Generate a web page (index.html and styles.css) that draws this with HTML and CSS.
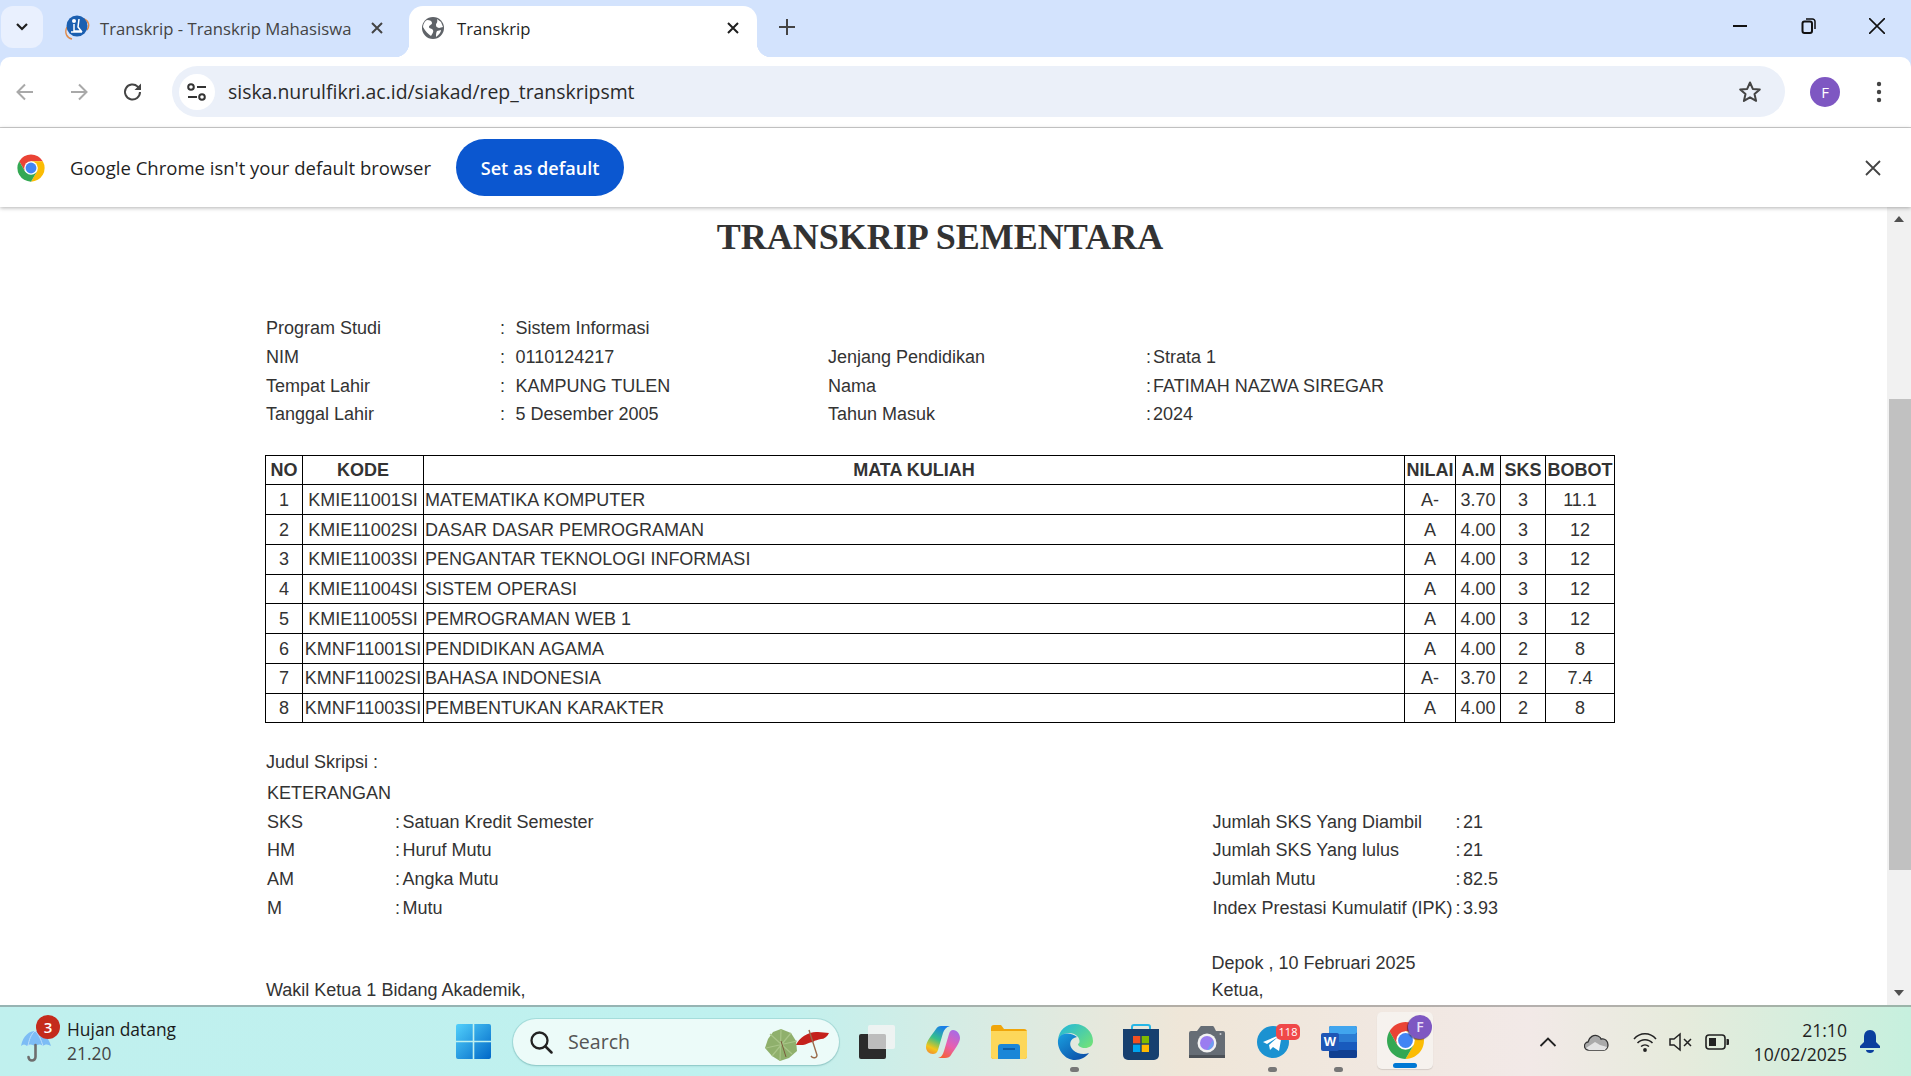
FILE: index.html
```html
<!DOCTYPE html>
<html lang="id">
<head>
<meta charset="utf-8">
<title>Transkrip</title>
<link rel="stylesheet" href="styles.css">
</head>
<body>
<header class="tabstrip">
  <button class="tab-search"><svg width="14" height="10" viewBox="0 0 14 10"><path d="M2 2l5 5 5-5" fill="none" stroke="#1f1f1f" stroke-width="2.2"/></svg></button>
  <div class="tab tab-idle">
    <svg class="favicon" width="26" height="26" viewBox="0 0 26 26"><path d="M3 12c-3 6 0 11 5 12" fill="none" stroke="#e08a4a" stroke-width="1.4"/><path d="M20 4c5 2 6 7 3 11" fill="none" stroke="#e08a4a" stroke-width="1.4"/><circle cx="13" cy="11" r="10.5" fill="#1b5fb0"/><circle cx="10" cy="6" r="2" fill="#fff"/><path d="M10 9v7h7M15 4l-1 8 4 5M7 17h11" fill="none" stroke="#fff" stroke-width="1.5"/></svg>
    <span class="tab-title">Transkrip - Transkrip Mahasiswa</span>
    <svg class="tab-x" width="14" height="14" viewBox="0 0 14 14"><path d="M2 2l10 10M12 2L2 12" stroke="#444" stroke-width="2"/></svg>
  </div>
  <div class="tab tab-active">
    <svg class="globe" width="22" height="22" viewBox="0 0 22 22"><circle cx="11" cy="11" r="11" fill="#5f6368"/><path d="M5 3c3 0 5 1 5 3s-3 2-3 4 3 1 4 3-1 4-2 6c-3-2-6-5-8-9 0-3 2-6 4-7zM15 2l4 3 2 5-4 1c-2-1-3-1-3-3s2-2 1-6zM15 14l4-1c0 2-2 5-5 7 0-3 0-4 1-6z" fill="#fff"/></svg>
    <span class="tab-title">Transkrip</span>
    <svg class="tab-x" width="14" height="14" viewBox="0 0 14 14"><path d="M2 2l10 10M12 2L2 12" stroke="#1f1f1f" stroke-width="2"/></svg>
  </div>
  <svg class="newtab" width="18" height="18" viewBox="0 0 18 18"><path d="M9 1v16M1 9h16" stroke="#444" stroke-width="2"/></svg>
  <div class="winctl">
    <svg width="16" height="16" viewBox="0 0 16 16"><path d="M1 8h14" stroke="#111" stroke-width="2"/></svg>
    <svg width="16" height="16" viewBox="0 0 16 16"><rect x="1.5" y="3.5" width="9.5" height="11.5" rx="2" fill="none" stroke="#111" stroke-width="2"/><path d="M5 1h6.5a2.5 2.5 0 0 1 2.5 2.5V11" fill="none" stroke="#111" stroke-width="1.5"/></svg>
    <svg width="16" height="16" viewBox="0 0 16 16"><path d="M0 0l16 16M16 0L0 16" stroke="#111" stroke-width="1.6"/></svg>
  </div>
</header>

<nav class="toolbar">
  <svg class="navbtn" width="20" height="20" viewBox="0 0 20 20"><path d="M18 10H3M10 2.5L2.5 10l7.5 7.5" fill="none" stroke="#a9a9a9" stroke-width="2"/></svg>
  <svg class="navbtn" width="20" height="20" viewBox="0 0 20 20"><path d="M2 10h15M10 2.5l7.500 7.500-7.500 7.500" fill="none" stroke="#a9a9a9" stroke-width="2"/></svg>
  <svg class="navbtn" width="20" height="20" viewBox="0 0 20 20"><path d="M17 10a7.500 7.500 0 1 1-2.300-5.400L17 7" fill="none" stroke="#444" stroke-width="2"/><path d="M18 1.500V8h-6.500z" fill="#444"/></svg>
  <div class="omnibox">
    <span class="siteinfo"><svg width="20" height="18" viewBox="0 0 20 18"><circle cx="4" cy="4" r="2.800" fill="none" stroke="#333" stroke-width="2"/><path d="M10 4h9M1 14h9" stroke="#333" stroke-width="2"/><circle cx="15" cy="14" r="2.800" fill="none" stroke="#333" stroke-width="2"/></svg></span>
    <span class="url">siska.nurulfikri.ac.id/siakad/rep_transkripsmt</span>
    <svg class="star" width="24" height="24" viewBox="0 0 24 24"><path d="M12 2.500l2.800 6.400 7 .6-5.300 4.600 1.600 6.800-6.100-3.600-6.100 3.600 1.600-6.800-5.300-4.600 7-.6z" fill="none" stroke="#444" stroke-width="2" stroke-linejoin="round"/></svg>
  </div>
  <span class="avatar">F</span>
  <svg class="kebab" width="6" height="22" viewBox="0 0 6 22"><circle cx="3" cy="3" r="2.200" fill="#444"/><circle cx="3" cy="11" r="2.200" fill="#444"/><circle cx="3" cy="19" r="2.200" fill="#444"/></svg>
</nav>

<aside class="infobar">
  <svg class="chrome-logo" width="30" height="30" viewBox="4 2 40 44"><use href="#chrome"/></svg>
  <span class="info-text">Google Chrome isn't your default browser</span>
  <button class="set-default">Set as default</button>
  <svg class="info-x" width="16" height="16" viewBox="0 0 16 16"><path d="M1 1l14 14M15 1L1 15" stroke="#444" stroke-width="1.800"/></svg>
</aside>

<div class="viewport">
  <main class="page">
    <h1 class="title">TRANSKRIP SEMENTARA</h1>
    <section class="identity">
      <span>Program Studi</span><span>:</span><span>Sistem Informasi</span><span></span><span></span><span></span>
      <span>NIM</span><span>:</span><span>0110124217</span><span>Jenjang Pendidikan</span><span>:</span><span>Strata 1</span>
      <span>Tempat Lahir</span><span>:</span><span>KAMPUNG TULEN</span><span>Nama</span><span>:</span><span>FATIMAH NAZWA SIREGAR</span>
      <span>Tanggal Lahir</span><span>:</span><span>5 Desember 2005</span><span>Tahun Masuk</span><span>:</span><span>2024</span>
    </section>
    <table class="grades">
      <colgroup><col class="c-no"><col class="c-kode"><col class="c-mk"><col class="c-nilai"><col class="c-am"><col class="c-sks"><col class="c-bobot"></colgroup>
      <thead><tr><th>NO</th><th>KODE</th><th>MATA KULIAH</th><th>NILAI</th><th>A.M</th><th>SKS</th><th>BOBOT</th></tr></thead>
      <tbody>
        <tr><td>1</td><td>KMIE11001SI</td><td>MATEMATIKA KOMPUTER</td><td>A-</td><td>3.70</td><td>3</td><td>11.1</td></tr>
        <tr><td>2</td><td>KMIE11002SI</td><td>DASAR DASAR PEMROGRAMAN</td><td>A</td><td>4.00</td><td>3</td><td>12</td></tr>
        <tr><td>3</td><td>KMIE11003SI</td><td>PENGANTAR TEKNOLOGI INFORMASI</td><td>A</td><td>4.00</td><td>3</td><td>12</td></tr>
        <tr><td>4</td><td>KMIE11004SI</td><td>SISTEM OPERASI</td><td>A</td><td>4.00</td><td>3</td><td>12</td></tr>
        <tr><td>5</td><td>KMIE11005SI</td><td>PEMROGRAMAN WEB 1</td><td>A</td><td>4.00</td><td>3</td><td>12</td></tr>
        <tr><td>6</td><td>KMNF11001SI</td><td>PENDIDIKAN AGAMA</td><td>A</td><td>4.00</td><td>2</td><td>8</td></tr>
        <tr><td>7</td><td>KMNF11002SI</td><td>BAHASA INDONESIA</td><td>A-</td><td>3.70</td><td>2</td><td>7.4</td></tr>
        <tr><td>8</td><td>KMNF11003SI</td><td>PEMBENTUKAN KARAKTER</td><td>A</td><td>4.00</td><td>2</td><td>8</td></tr>
      </tbody>
    </table>
    <p class="thesis">Judul Skripsi :</p>
    <section class="notes">
      <div class="legend">
        <span class="legend-head">KETERANGAN</span>
        <span>SKS</span><span>:</span><span>Satuan Kredit Semester</span>
        <span>HM</span><span>:</span><span>Huruf Mutu</span>
        <span>AM</span><span>:</span><span>Angka Mutu</span>
        <span>M</span><span>:</span><span>Mutu</span>
      </div>
      <div class="summary">
        <span>Jumlah SKS Yang Diambil</span><span>:</span><span>21</span>
        <span>Jumlah SKS Yang lulus</span><span>:</span><span>21</span>
        <span>Jumlah Mutu</span><span>:</span><span>82.5</span>
        <span>Index Prestasi Kumulatif (IPK)</span><span>:</span><span>3.93</span>
      </div>
    </section>
    <section class="signatures">
      <div class="sign-left">Wakil Ketua 1 Bidang Akademik,</div>
      <div class="sign-right"><div>Depok , 10 Februari 2025</div><div>Ketua,</div></div>
    </section>
  </main>
  <div class="scrollbar">
    <span class="arrow-up"></span>
    <span class="thumb"></span>
    <span class="arrow-down"></span>
  </div>
</div>

<footer class="taskbar">
  <div class="weather">
    <span class="weather-icon">
      <svg width="32" height="40" viewBox="0 0 32 40"><path d="M1 21C3 10 10 6 15 6s13 4 16 15c-3-2-6-2-8 0-2-2-5-2-8 0-3-2-6-2-8 0-2-2-4-2-6 0z" fill="#7dbcf5"/><path d="M15 6c-4 3-6 9-7 15M15 6c4 3 6 9 8 15" stroke="#bfe0fb" stroke-width="1" fill="none"/><path d="M15.500 20v12a3.500 3.500 0 0 1-7 0" fill="none" stroke="#6e6e6e" stroke-width="2.600" stroke-linecap="round"/></svg>
      <span class="weather-badge">3</span>
    </span>
    <span class="weather-text"><span class="weather-title">Hujan datang</span><span class="weather-sub">21.20</span></span>
  </div>
  <svg class="winlogo" width="35" height="35" viewBox="0 0 35 35"><defs><linearGradient id="wg" x1="0" y1="0" x2="1" y2="1"><stop offset="0" stop-color="#52d0fb"/><stop offset="1" stop-color="#0068c8"/></linearGradient></defs><path d="M2 0h14.700v16.700H0V2a2 2 0 0 1 2-2zM18.300 0H33a2 2 0 0 1 2 2v14.700H18.300zM0 18.300h16.700V35H2a2 2 0 0 1-2-2zM18.300 18.300H35V33a2 2 0 0 1-2 2H18.300z" fill="url(#wg)"/></svg>
  <div class="searchbox">
    <svg width="24" height="24" viewBox="0 0 24 24"><circle cx="10.500" cy="10.500" r="8" fill="none" stroke="#222" stroke-width="2.300"/><path d="M16.500 16.500l6 6" stroke="#222" stroke-width="2.500" stroke-linecap="round"/></svg>
    <span class="search-label">Search</span>
    <svg class="search-art" width="66" height="34" viewBox="0 0 66 34"><path d="M16 1l10 4 5 8 1 10-8 7-9 3-8-5-7-8 3-9 5-7z" fill="#8fb06c"/><path d="M16 1l-1 32M1 20L32 13M5 6l22 20M26 5L7 28" stroke="#a9c588" stroke-width="1.200"/><path d="M16 13l5 16" stroke="#7a5a3c" stroke-width="1"/><path d="M31 17c3-8 14-14 22-13l11 1c-2 4-5 6-8 6-3 1-6 1-8 3-4 0-7 3-10 3z" fill="#c4211c"/><path d="M44 2l8 25c0 3-4 4-6 1" fill="none" stroke="#9b6b4a" stroke-width="1.400"/></svg>
  </div>
  <div class="apps">
    <span class="app"><svg width="36" height="34" viewBox="0 0 36 34"><rect x="0" y="9" width="27" height="25" rx="2" fill="#2b2b2b"/><rect x="9" y="0" width="27" height="24" rx="2" fill="#f3f3f3" fill-opacity=".85"/><rect x="9" y="9" width="18" height="15" rx="2" fill="#bdbdbd"/></svg></span>
    <span class="app"><svg width="34" height="32" viewBox="0 0 34 32"><defs><linearGradient id="cp1" x1=".6" y1="0" x2=".2" y2="1"><stop offset="0" stop-color="#1a7fe8"/><stop offset=".45" stop-color="#35c08a"/><stop offset=".8" stop-color="#f5c518"/><stop offset="1" stop-color="#f09030"/></linearGradient><linearGradient id="cp2" x1=".8" y1="0" x2=".3" y2="1"><stop offset="0" stop-color="#a46be8"/><stop offset=".55" stop-color="#e85fb0"/><stop offset="1" stop-color="#f4613a"/></linearGradient></defs><path d="M10 3C11 1 13 0 15 0H24C20 1 18 4 17 7L12 24C11 27 9 28 7 28 3 28 0 25 0 21 0 15 6 9 10 3z" fill="url(#cp1)"/><path d="M19 32H12C16 31 17 28 18 25L23 8C24 5 25 4 27 4 31 4 34 8 34 12 34 17 28 24 25 29 24 31 22 32 19 32z" fill="url(#cp2)"/></svg></span>
    <span class="app"><svg width="36" height="34" viewBox="0 0 36 34"><path d="M0 3a3 3 0 0 1 3-3h7l3 4h20a3 3 0 0 1 3 3v24a3 3 0 0 1-3 3H3a3 3 0 0 1-3-3z" fill="#f0a50a"/><path d="M0 6h36v25a3 3 0 0 1-3 3H3a3 3 0 0 1-3-3z" fill="#fdd75a"/><path d="M7 34V22a3 3 0 0 1 3-3h16a3 3 0 0 1 3 3v12z" fill="#1a86d8"/><path d="M12 24h12" stroke="#0b5ea8" stroke-width="2"/></svg></span>
    <span class="app app-dot"><svg width="36" height="36" viewBox="0 0 36 36"><defs><linearGradient id="eg" x1="0" y1="0" x2="1" y2=".8"><stop offset="0" stop-color="#1fb6e0"/><stop offset="1" stop-color="#6fe07c"/></linearGradient><linearGradient id="eb" x1="0" y1="0" x2=".8" y2="1"><stop offset="0" stop-color="#1aa0e0"/><stop offset="1" stop-color="#0b4fa8"/></linearGradient></defs><path d="M1 16C2 6 9 0 18 0 28 0 36 8 36 17 36 22 32 24 28 24 24 24 21 22 21 20 23 19 23 16 21 13 18 9 12 8 7 10 4 11 2 13 1 16z" fill="url(#eg)"/><path d="M1 16C0 26 8 36 18 36 24 36 29 33 32 29 27 31 20 30 16 26 11 21 13 14 20 13 14 8 3 8 1 16z" fill="url(#eb)"/></svg></span>
    <span class="app"><svg width="36" height="36" viewBox="0 0 36 36"><path d="M9 6V3a2 2 0 0 1 2-2h14a2 2 0 0 1 2 2v3" fill="none" stroke="#27b6e6" stroke-width="2"/><path d="M0 5h36v26a5 5 0 0 1-5 5H5a5 5 0 0 1-5-5z" fill="#17406f"/><rect x="10" y="12" width="7.300" height="7.300" fill="#f25022"/><rect x="18.700" y="12" width="7.300" height="7.300" fill="#7fba00"/><rect x="10" y="20.700" width="7.300" height="7.300" fill="#00a4ef"/><rect x="18.700" y="20.700" width="7.300" height="7.300" fill="#ffb900"/></svg></span>
    <span class="app"><svg width="36" height="32" viewBox="0 0 36 32"><path d="M0 7a2 2 0 0 1 2-2h6l3-4a2 2 0 0 1 1-1h11a2 2 0 0 1 2 1l2 4h7a2 2 0 0 1 2 2v25H0z" fill="#666d75"/><rect x="0" y="29" width="36" height="3" fill="#4c5157"/><circle cx="18" cy="17" r="9.500" fill="#f2f2f2"/><circle cx="18" cy="17" r="7" fill="#9a7df0"/><path d="M18 24a7 7 0 0 0 6-10z" fill="#6ea0f0"/><circle cx="31.500" cy="8" r="1" fill="#c9cdd2"/></svg></span>
    <span class="app app-dot"><span class="tg-wrap"><svg width="32" height="32" viewBox="0 0 32 32"><circle cx="16" cy="16" r="16" fill="#1b92d1"/><path d="M6 16l19-8-3 17-6-4-3 3-1-5 9-8-11 7z" fill="#fff"/></svg><span class="tg-badge">118</span></span></span>
    <span class="app app-dot"><span class="word"><svg width="36" height="32" viewBox="0 0 36 32"><rect x="8" y="0" width="28" height="32" rx="2" fill="#185abd"/><rect x="8" y="0" width="28" height="8" rx="2" fill="#41a5ee"/><rect x="8" y="8" width="28" height="8" fill="#2b7cd3"/><rect x="8" y="24" width="28" height="8" rx="2" fill="#103f91"/></svg><span class="word-w">W</span></span></span>
    <span class="app app-active">
      <svg width="37" height="37" viewBox="4 4 40 40"><use href="#chrome"/></svg>
      <span class="chrome-badge">F</span>
    </span>
  </div>
  <div class="tray">
    <svg width="18" height="12" viewBox="0 0 18 12"><path d="M1.500 10L9 2.500 16.500 10" fill="none" stroke="#222" stroke-width="1.800"/></svg>
    <svg width="25" height="18" viewBox="0 0 25 18"><path d="M5 17a4 4 0 0 1-1-8c1-5 6-8 10-6 2 1 3 2 3 3 4-1 7 2 7 6 0 3-2 5-4 5z" fill="#aaa" stroke="#333" stroke-width="1.300"/><path d="M2 15l9-6 5 3 7 2-2 3H5z" fill="#e3e3e3"/></svg>
    <svg width="24" height="20" viewBox="0 0 24 20"><path d="M1 7c6-7 16-7 22 0M4.500 11c4-4.500 11-4.500 15 0M8 14.500c2.300-2 5.700-2 8 0" fill="none" stroke="#222" stroke-width="1.500"/><circle cx="12" cy="18" r="1.900" fill="#222"/></svg>
    <svg width="24" height="20" viewBox="0 0 24 20"><path d="M1 7h4l6-5v16l-6-5H1z" fill="none" stroke="#222" stroke-width="1.500"/><path d="M15 7l7 7M22 7l-7 7" stroke="#222" stroke-width="1.500"/></svg>
    <svg width="24" height="16" viewBox="0 0 24 16"><rect x="1" y="1" width="19" height="14" rx="3" fill="none" stroke="#222" stroke-width="1.600"/><rect x="4" y="4" width="7" height="8" fill="#222"/><path d="M21.500 5h1.500a1 1 0 0 1 1 1v4a1 1 0 0 1-1 1h-1.500z" fill="#222"/></svg>
    <div class="clock"><span>21:10</span><span>10/02/2025</span></div>
    <svg class="bell" width="20" height="24" viewBox="0 0 20 24"><path d="M10 0c4 0 6 3 6 7v5l4 4v2H0v-2l4-4V7c0-4 2-7 6-7z" fill="#0a3f9e"/><path d="M6 20h8c0 2-2 3-4 3s-4-1-4-3z" fill="#0a3f9e"/></svg>
  </div>
</footer>

<svg class="defs" width="0" height="0"><defs><g id="chrome"><path d="M41.300 14A20 20 0 0 0 6.700 14L15.340 29 24 14z" fill="#ea4335"/><path d="M24 44A20 20 0 0 0 41.300 14H24l8.660 15z" fill="#fbbc04"/><path d="M6.700 14A20 20 0 0 0 24 44l8.660-15H15.340z" fill="#34a853"/><circle cx="24" cy="24" r="10" fill="#fff"/><circle cx="24" cy="24" r="8" fill="#4285f4"/></g></defs></svg>
</body>
</html>
```

FILE: styles.css
```css
* { box-sizing: border-box; }
html, body { margin: 0; height: 100%; }
body {
  width: 1911px;
  height: 1076px;
  overflow: hidden;
  display: flex;
  flex-direction: column;
  background: #d3e3fd;
  font-family: "Open Sans", "Noto Sans", sans-serif;
  color: #1f1f1f;
}
.defs { position: absolute; }

/* tab strip */
.tabstrip {
  height: 57px;
  flex: none;
  display: flex;
  align-items: flex-end;
  background: #d3e3fd;
  padding-left: 1px;
}
.tab-search {
  width: 42px;
  height: 42px;
  margin-bottom: 9px;
  border: 0;
  border-radius: 12px;
  background: #e9f0fe;
  display: flex;
  align-items: center;
  justify-content: center;
  padding: 0;
}
.tab {
  height: 51px;
  display: flex;
  align-items: center;
  position: relative;
  font-size: 16.7px;
  padding-bottom: 8px;
}
.tab-title { position: relative; top: 1px; }
.tab-idle { width: 366px; padding-left: 21px; color: #444; }
.tab-idle .favicon { margin-right: 10px; }
.tab-idle .tab-x { margin-left: 19px; }
.tab-active {
  width: 348px;
  padding-left: 13px;
  background: #fff;
  border-radius: 14px 14px 0 0;
}
.tab-active::before,
.tab-active::after {
  content: "";
  position: absolute;
  bottom: 0;
  width: 14px;
  height: 14px;
}
.tab-active::before { left: -14px; background: radial-gradient(circle at 0 0, transparent 14px, #fff 14.5px); }
.tab-active::after { right: -14px; background: radial-gradient(circle at 100% 0, transparent 14px, #fff 14.5px); }
.globe { margin-right: 13px; }
.tab-active .tab-title { flex: 1; }
.tab-active .tab-x { margin-right: 17px; }
.newtab { margin: 0 0 21px 21px; }
.winctl {
  margin-left: auto;
  height: 52px;
  width: 153px;
  margin-right: 26px;
  display: flex;
  justify-content: space-between;
  padding-top: 18px;
  align-self: flex-start;
}

/* toolbar */
.toolbar {
  height: 71px;
  flex: none;
  display: flex;
  align-items: center;
  background: #fff;
  border-radius: 10px 10px 0 0;
  border-bottom: 1px solid #cfcfcf;
  padding: 0 0 1px 15px;
}
.navbtn { margin-right: 34px; }
.navbtn:nth-of-type(3) { margin-right: 29px; }
.omnibox {
  width: 1613px;
  height: 51px;
  background: #ebf0f9;
  border-radius: 26px;
  display: flex;
  align-items: center;
  padding: 0 23px 0 7px;
}
.siteinfo {
  width: 36px;
  height: 36px;
  background: #fff;
  border-radius: 50%;
  display: flex;
  align-items: center;
  justify-content: center;
  flex: none;
}
.url { flex: 1; margin-left: 13px; font-size: 19.42px; color: #2a2a2a; }
.avatar {
  width: 30px;
  height: 30px;
  margin-left: 25px;
  border-radius: 50%;
  background: #7e57c2;
  color: #fff;
  font-size: 15px;
  display: flex;
  align-items: center;
  justify-content: center;
  flex: none;
}
.kebab { margin-left: 36px; }

/* infobar */
.infobar {
  height: 79px;
  flex: none;
  display: flex;
  align-items: center;
  background: #fff;
  padding-left: 16px;
  position: relative;
  z-index: 2;
  box-shadow: 0 1px 4px rgba(0, 0, 0, .3);
}
.info-text { margin-left: 24px; font-size: 18.52px; color: #1f1f1f; }
.set-default {
  width: 168px;
  height: 57px;
  margin-left: 25px;
  border: 0;
  border-radius: 29px;
  background: #0b57d0;
  color: #fff;
  font-family: inherit;
  font-size: 18.1px;
  font-weight: 600;
  padding: 0;
}
.info-x { margin-left: auto; margin-right: 30px; }

/* page */
.viewport {
  flex: 1;
  min-height: 0;
  display: flex;
  background: #fff;
}
.page {
  flex: 1;
  min-width: 0;
  overflow: hidden;
  padding-left: 265px;
  font-family: "Liberation Sans", Arial, sans-serif;
  font-size: 18px;
  color: #333;
}
.title {
  width: 1350px;
  height: 40px;
  margin: 10px 0 57.4px;
  text-align: center;
  font-family: "Liberation Serif", "Times New Roman", serif;
  font-size: 36px;
  line-height: 40px;
  font-weight: 700;
}
.identity {
  display: grid;
  grid-template-columns: 234px 15.5px 312.5px 318px 7px 1fr;
  grid-auto-rows: 28.7px;
  align-items: center;
  margin-left: 1px;
  width: 1300px;
}
.grades {
  width: 1350px;
  margin-top: 25.6px;
  border-collapse: collapse;
  table-layout: fixed;
  font-size: 18px;
}
.grades th, .grades td {
  border: 1px solid #000;
  height: 29.75px;
  padding: 0;
  text-align: center;
  line-height: 20px;
  overflow: visible;
  white-space: nowrap;
}
.grades td:nth-child(3) { text-align: left; padding-left: 1px; }
.c-no { width: 37px; }
.c-kode { width: 121px; }
.c-mk { width: 981px; }
.c-nilai { width: 51px; }
.c-am { width: 45px; }
.c-sks { width: 45px; }
.c-bobot { width: 69px; }
.thesis {
  margin: 25px 0 0 1px;
  height: 29px;
  line-height: 29px;
}
.notes {
  display: flex;
  line-height: 29px;
  padding-top: 1.4px;
}
.legend {
  width: 947.500px;
  padding-left: 2px;
  display: grid;
  grid-template-columns: 128px 7.500px 1fr;
  grid-auto-rows: 28.7px;
}
.legend-head { grid-column: 1 / -1; }
.summary {
  padding-top: 28.7px;
  display: grid;
  grid-template-columns: 243px 7.500px 1fr;
  grid-auto-rows: 28.7px;
  align-self: start;
  flex: 1;
}
.signatures {
  display: flex;
  align-items: flex-end;
  margin-top: 27.6px;
  padding-left: 1px;
  line-height: 27px;
}
.sign-left { width: 945.500px; }

/* scrollbar */
.scrollbar {
  width: 24px;
  flex: none;
  background: #f1f1f1;
  display: flex;
  flex-direction: column;
  align-items: flex-end;
  position: relative;
  z-index: 1;
}
.arrow-up, .arrow-down {
  width: 0;
  height: 0;
  border-left: 5px solid transparent;
  border-right: 5px solid transparent;
  margin-right: 7px;
}
.arrow-up { border-bottom: 6px solid #505050; margin-top: 9px; }
.arrow-down { border-top: 6px solid #505050; margin-top: 120px; }
.thumb {
  width: 22px;
  height: 471px;
  background: #c1c1c1;
  margin-top: 177px;
}

/* taskbar */
.taskbar {
  height: 71px;
  flex: none;
  display: flex;
  align-items: center;
  border-top: 2px solid rgba(90, 90, 90, .4);
  background: linear-gradient(90deg, #c0f0ee 0, #bff1ef 40%, #efe6d8 62%, #f2e9e7 80%, #e6ebdc 88%, #c6f0de 100%);
}
.weather {
  width: 456px;
  padding-left: 20px;
  display: flex;
  align-items: center;
  flex: none;
}
.weather-icon { position: relative; width: 32px; height: 40px; margin-top: 6px; }
.weather-badge {
  position: absolute;
  left: 16px;
  top: -10px;
  width: 24px;
  height: 24px;
  border-radius: 50%;
  background: #c42b1c;
  color: #fff;
  font-size: 15px;
  font-weight: 600;
  display: flex;
  align-items: center;
  justify-content: center;
}
.weather-text { display: flex; flex-direction: column; margin: -2px 0 0 15px; }
.weather-title { font-size: 17.4px; line-height: 24px; color: #1b1b1b; }
.weather-sub { font-size: 17.4px; line-height: 24px; color: #444; }
.winlogo { flex: none; }
.searchbox {
  width: 326px;
  height: 46px;
  margin-left: 22px;
  border-radius: 23px;
  background: #ecfbf9;
  box-shadow: 0 0 0 1px rgba(120, 190, 190, .35), 0 1px 2px rgba(60, 120, 120, .3);
  display: flex;
  align-items: center;
  padding-left: 16px;
  flex: none;
  position: relative;
}
.search-label { margin-left: 15px; font-size: 19.6px; color: #555; }
.search-art { position: absolute; right: 8px; top: 9px; }
.apps { display: flex; margin-left: 5px; flex: none; }
.app {
  width: 66px;
  height: 60px;
  display: flex;
  align-items: center;
  justify-content: center;
  position: relative;
}
.app-dot::after {
  content: "";
  position: absolute;
  bottom: 0;
  left: 28px;
  width: 9px;
  height: 5px;
  border-radius: 3px;
  background: #777;
}
.app-active {
  width: 56px;
  height: 57px;
  margin-left: 5px;
  border-radius: 5px;
  background: #f6f2ee;
  box-shadow: 0 1px 1px rgba(0, 0, 0, .12);
}
.app-active::after {
  content: "";
  position: absolute;
  bottom: 1px;
  left: 16px;
  width: 24px;
  height: 5px;
  border-radius: 3px;
  background: #0078d4;
}
.chrome-badge {
  position: absolute;
  left: 31px;
  top: 3px;
  width: 24px;
  height: 24px;
  border-radius: 50%;
  background: #7e57c2;
  color: #e8def8;
  font-size: 14px;
  font-weight: 600;
  display: flex;
  align-items: center;
  justify-content: center;
  box-shadow: -1px 1px 1px rgba(40, 20, 80, .6);
}
.tg-wrap { position: relative; display: flex; }
.tg-badge {
  position: absolute;
  left: 19px;
  top: -2px;
  width: 24px;
  height: 16px;
  border-radius: 5px;
  background: #f04848;
  color: #fff;
  font-size: 11px;
  line-height: 16px;
  text-align: center;
}
.word { position: relative; display: flex; }
.word-w {
  position: absolute;
  left: 0;
  top: 7px;
  width: 18px;
  height: 18px;
  border-radius: 2px;
  background: #1e56b6;
  color: #fff;
  font-family: "Liberation Sans", sans-serif;
  font-size: 13px;
  font-weight: 700;
  line-height: 18px;
  text-align: center;
}
.tray {
  flex: 1;
  display: flex;
  align-items: center;
  padding-left: 106px;
  gap: 0;
}
.tray > svg:nth-child(1) { margin-right: 27px; }
.tray > svg:nth-child(2) { margin-right: 24px; }
.tray > svg:nth-child(3) { margin-right: 12px; }
.tray > svg:nth-child(4) { margin-right: 12px; }
.clock {
  width: 118px;
  display: flex;
  flex-direction: column;
  align-items: flex-end;
  font-size: 17.6px;
  line-height: 24px;
  color: #1f1f1f;
}
.bell { margin-left: 13px; }
```
